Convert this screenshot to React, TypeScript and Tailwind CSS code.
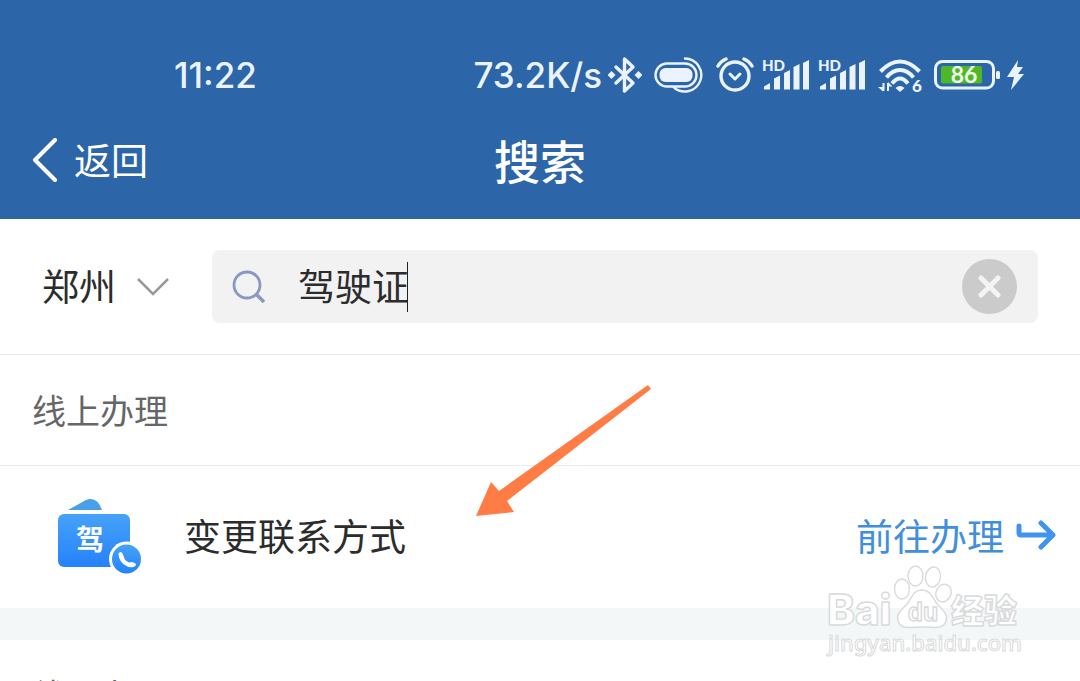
import { useState } from "react";

const CJK = "font-['Noto_Sans_CJK_SC',sans-serif]";

function BluetoothIcon() {
	return (
		<svg viewBox="0 0 34 38" className="h-[38px] w-[34px]" fill="none" stroke="currentColor" strokeWidth="3.4">
			<path d="M8 11 25 27 16.500 35V3L25 11 8 27" strokeLinejoin="round" strokeLinecap="round" />
			<path d="M3.500 15 7.500 19l-4 4L-.5 19zM30.500 15 34.500 19l-4 4L26.500 19z" fill="currentColor" stroke="none" />
		</svg>
	);
}

function NearbyIcon() {
	return (
		<svg viewBox="0 0 50 38" className="h-[38px] w-[50px]" fill="none" stroke="currentColor" strokeWidth="2.4">
			<rect x="1.500" y="7.500" width="41" height="23" rx="11.500" />
			<rect x="5.500" y="12" width="33" height="14" rx="6" fill="currentColor" stroke="none" />
			<path d="M31 2.500A16.500 16.500 0 1 1 20 31.500" strokeLinecap="round" />
		</svg>
	);
}

function AlarmIcon() {
	return (
		<svg viewBox="0 0 38 38" className="size-[38px]" fill="none" stroke="currentColor" strokeWidth="3.4">
			<circle cx="19" cy="20" r="14" />
			<path d="m14 18 5 5 5-5" strokeLinecap="round" strokeLinejoin="round" strokeWidth="3" />
			<path d="M2 10Q5 5 10 3M36 10Q33 5 28 3" strokeLinecap="round" />
		</svg>
	);
}

function SignalIcon() {
	return (
		<svg viewBox="0 0 48 38" className="h-[38px] w-[48px]" fill="currentColor">
			<text x="0" y="15" fontSize="15" fontWeight="900" fontFamily="Lato, sans-serif">
				HD
			</text>
			<path d="M2 33.500v-3L8 27v6.500zM12 33.500V22.500l6-3v14zM22 33.500V17l6-3v19.500zM31.500 33.500V11l6-3v25.500zM41 33.500V7l6-3v29.500z" />
		</svg>
	);
}

function WifiIcon() {
	return (
		<svg viewBox="0 0 46 40" className="h-[40px] w-[46px]" fill="none" stroke="currentColor" strokeWidth="4">
			<path d="M2.500 16.500Q12 6.500 22 6.500T41.500 16.500M8.500 22.500Q14.500 15 22 15T35.500 22.500M14 28.500Q18 23.500 22 23.500T30 28.500" />
			<path d="M17.500 33Q22 29 26.500 33L22 37z" fill="currentColor" stroke="none" />
			<path d="M5.500 36V28M10 36V28" strokeWidth="2" />
			<path d="M0 32H5v4.500zM14.500 31.500 10 27v4.500z" fill="currentColor" stroke="none" />
			<text x="34" y="37" fontSize="17" fontWeight="900" fontFamily="Lato, sans-serif" fill="currentColor" stroke="none">
				6
			</text>
		</svg>
	);
}

function Battery() {
	return (
		<svg viewBox="0 0 92 32" className="h-[32px] w-[92px]">
			<rect x="1.500" y="2.500" width="58" height="26.500" rx="7" fill="none" stroke="currentColor" strokeWidth="3" />
			<rect x="7" y="7" width="41" height="17.500" rx="2" fill="#4fb828" />
			<rect x="62" y="12" width="4" height="8" rx="1.500" fill="currentColor" />
			<text x="30" y="24" textAnchor="middle" fontSize="23" fontWeight="700" fontFamily="Lato, sans-serif" fill="#f2fbe8">
				86
			</text>
			<path d="M84 1 73 18h7l-3 13 13-16h-6l5-7h-6z" fill="currentColor" />
		</svg>
	);
}

function StatusBar() {
	return (
		<div className="flex items-center justify-between pt-12 pr-[54px] pl-[174px] font-['Inter',sans-serif] text-[35px] leading-[54px] font-medium text-[#eaf3ff]">
			<span>11:22</span>
			<div className="flex items-center">
				<span className="mr-1.5">73.2K/s</span>
				<div className="flex items-center gap-3">
					<BluetoothIcon />
					<NearbyIcon />
					<AlarmIcon />
				</div>
				<div className="ml-2 flex items-center gap-2">
					<SignalIcon />
					<SignalIcon />
				</div>
				<div className="ml-3 flex items-center gap-2.5">
					<WifiIcon />
					<Battery />
				</div>
			</div>
		</div>
	);
}

function NavBar() {
	return (
		<nav className="grid h-[117px] grid-cols-3 items-center px-8 pb-0.5 text-white">
			<button type="button" className="flex items-center gap-4 justify-self-start text-[37px]">
				<svg viewBox="0 0 26 44" className="h-[44px] w-[26px]" fill="none" stroke="currentColor" strokeWidth="4">
					<path d="M23 2 3 22l20 20" strokeLinecap="round" strokeLinejoin="round" />
				</svg>
				返回
			</button>
			<h1 className="text-center text-[46px] font-medium">搜索</h1>
		</nav>
	);
}

function SearchBar() {
	const [city, setCity] = useState("郑州");
	const [keyword, setKeyword] = useState("驾驶证");

	return (
		<div className="flex items-center gap-[42px] border-b border-[#ebebeb] px-[42px] py-[31px]">
			<div className="flex items-center text-[37px]">
				<select
					aria-label="城市"
					value={city}
					onChange={(e) => setCity(e.target.value)}
					className="-mr-9 appearance-none bg-transparent pr-14 pb-1 leading-[54px] outline-none"
				>
					<option>郑州</option>
				</select>
				<svg viewBox="0 0 34 20" className="pointer-events-none h-5 w-[34px]" fill="none" stroke="#999" strokeWidth="2.500">
					<path d="m2 2 15 15L32 2" />
				</svg>
			</div>
			<div className="flex h-[73px] flex-1 items-center rounded-lg bg-[#f2f2f2] pr-[21px] pl-5">
				<svg viewBox="0 0 34 34" className="mr-8 size-[34px]" fill="none" stroke="#8a97c1" strokeWidth="2.800">
					<circle cx="15" cy="15" r="13" />
					<path d="m24 24 8 8" strokeWidth="3.500" />
				</svg>
				<input
					type="text"
					aria-label="搜索"
					value={keyword}
					onChange={(e) => setKeyword(e.target.value)}
					className="field-sizing-content pb-1 text-[37px] leading-[54px] caret-transparent outline-none"
				/>
				<span className="-ml-0.5 h-[50px] w-px bg-[#222]" />
				<button type="button" aria-label="清除" onClick={() => setKeyword("")} className="ml-auto rounded-full bg-[#cbcbcb] p-4">
					<svg viewBox="0 0 23 23" className="size-[23px]" stroke="#f4f4f4" strokeWidth="5" strokeLinecap="round">
						<path d="m3 3 17 17M20 3 3 20" />
					</svg>
				</button>
			</div>
		</div>
	);
}

function LicenseIcon() {
	return (
		<svg viewBox="0 0 84 78" className="h-[78px] w-[84px]">
			<defs>
				<linearGradient id="card" x1="0" y1="0" x2="0" y2="1">
					<stop offset="0" stopColor="#46a2f8" />
					<stop offset="1" stopColor="#2582fb" />
				</linearGradient>
			</defs>
			<path d="M10 12 28 2Q39-2 44 12z" fill="#4a9fe9" />
			<rect x="0" y="16" width="72" height="53" rx="6" fill="url(#card)" />
			<text x="32" y="52" textAnchor="middle" fontSize="28" fontWeight="700" fill="#fff">
				驾
			</text>
			<circle cx="68.500" cy="61" r="17.500" fill="#fff" />
			<circle cx="68.500" cy="61" r="14.500" fill="url(#card)" />
			<path d="M60.500 55.500q2-3 4 0l1.500 3.500q0 3 5 5.500l3-.5 3.500 1.500q1.500 2-2 3.500-5 1-9.500-2.500-5.500-4.500-5.500-11z" fill="#fff" />
		</svg>
	);
}

function SectionTitle({ title }: { title: string }) {
	return <h2 className="border-b border-[#ebebeb] px-8 text-[34px] leading-[110px] text-[#666]">{title}</h2>;
}

function ServiceRow() {
	return (
		<div className="flex h-[142px] items-center pr-6 pl-[58px] text-[37px]">
			<LicenseIcon />
			<span className="ml-[42px] pb-0.5">变更联系方式</span>
			<a href="#apply" className="ml-auto flex items-center gap-3 pb-0.5 text-[#3f8fdd]">
				前往办理
				<svg viewBox="0 0 40 32" className="h-8 w-10" fill="none" stroke="#4193ed" strokeWidth="5" strokeLinecap="round" strokeLinejoin="round">
					<path d="M3 6v7q0 2 2 2h31M25 3l12 12-12 12" />
				</svg>
			</a>
		</div>
	);
}

function PointerArrow() {
	return (
		<svg viewBox="0 0 175 132" className="pointer-events-none absolute top-[385px] left-[476px] h-[132px] w-[175px]">
			<path d="M172 0 175 4 31 116 38 127 0 131 15 97 23 106z" fill="#ff7d45" />
		</svg>
	);
}

function Watermark() {
	return (
		<svg
			viewBox="0 0 200 96"
			className="pointer-events-none absolute top-[564px] right-[56px] h-[96px] w-[200px]"
			fill="#fff"
			stroke="#d8dadb"
			strokeWidth="1.4"
			strokeLinejoin="round"
		>
			<text x="3" y="61" fontSize="42" fontWeight="800" fontFamily="Inter, sans-serif">
				Bai
			</text>
			<ellipse cx="78" cy="25" rx="7.500" ry="10" />
			<ellipse cx="91.500" cy="12" rx="7.500" ry="10" />
			<ellipse cx="109" cy="13" rx="7.500" ry="10" transform="rotate(10 109 13)" />
			<ellipse cx="119.500" cy="29" rx="7.500" ry="9" transform="rotate(25 119.500 29)" />
			<path d="M98 26c9 0 11 9 16 15 6 6 10 10 8 16-3 9-12 6-24 6s-21 3-24-6c-2-7 3-11 9-17 5-6 6-14 15-14z" />
			<text x="99" y="57" textAnchor="middle" fontSize="25" fontWeight="700" fontFamily="Liberation Sans, sans-serif">
				du
			</text>
			<text x="127" y="59" fontSize="33" fontWeight="900">
				经验
			</text>
			<text x="4" y="87" fontSize="22" fontWeight="500" fontFamily="Noto Sans, sans-serif" strokeWidth="1">
				jingyan.baidu.com
			</text>
		</svg>
	);
}

export default function App() {
	return (
		<div className={`relative h-screen overflow-hidden bg-white text-[#2c2c2c] ${CJK}`}>
			<header className="bg-[#2c65a8]">
				<StatusBar />
				<NavBar />
			</header>
			<main>
				<SearchBar />
				<section>
					<SectionTitle title="线上办理" />
					<ServiceRow />
				</section>
				<section className="border-t-32 border-[#f4f7f8]">
					<SectionTitle title="线下办理" />
				</section>
			</main>
			<PointerArrow />
			<Watermark />
		</div>
	);
}
